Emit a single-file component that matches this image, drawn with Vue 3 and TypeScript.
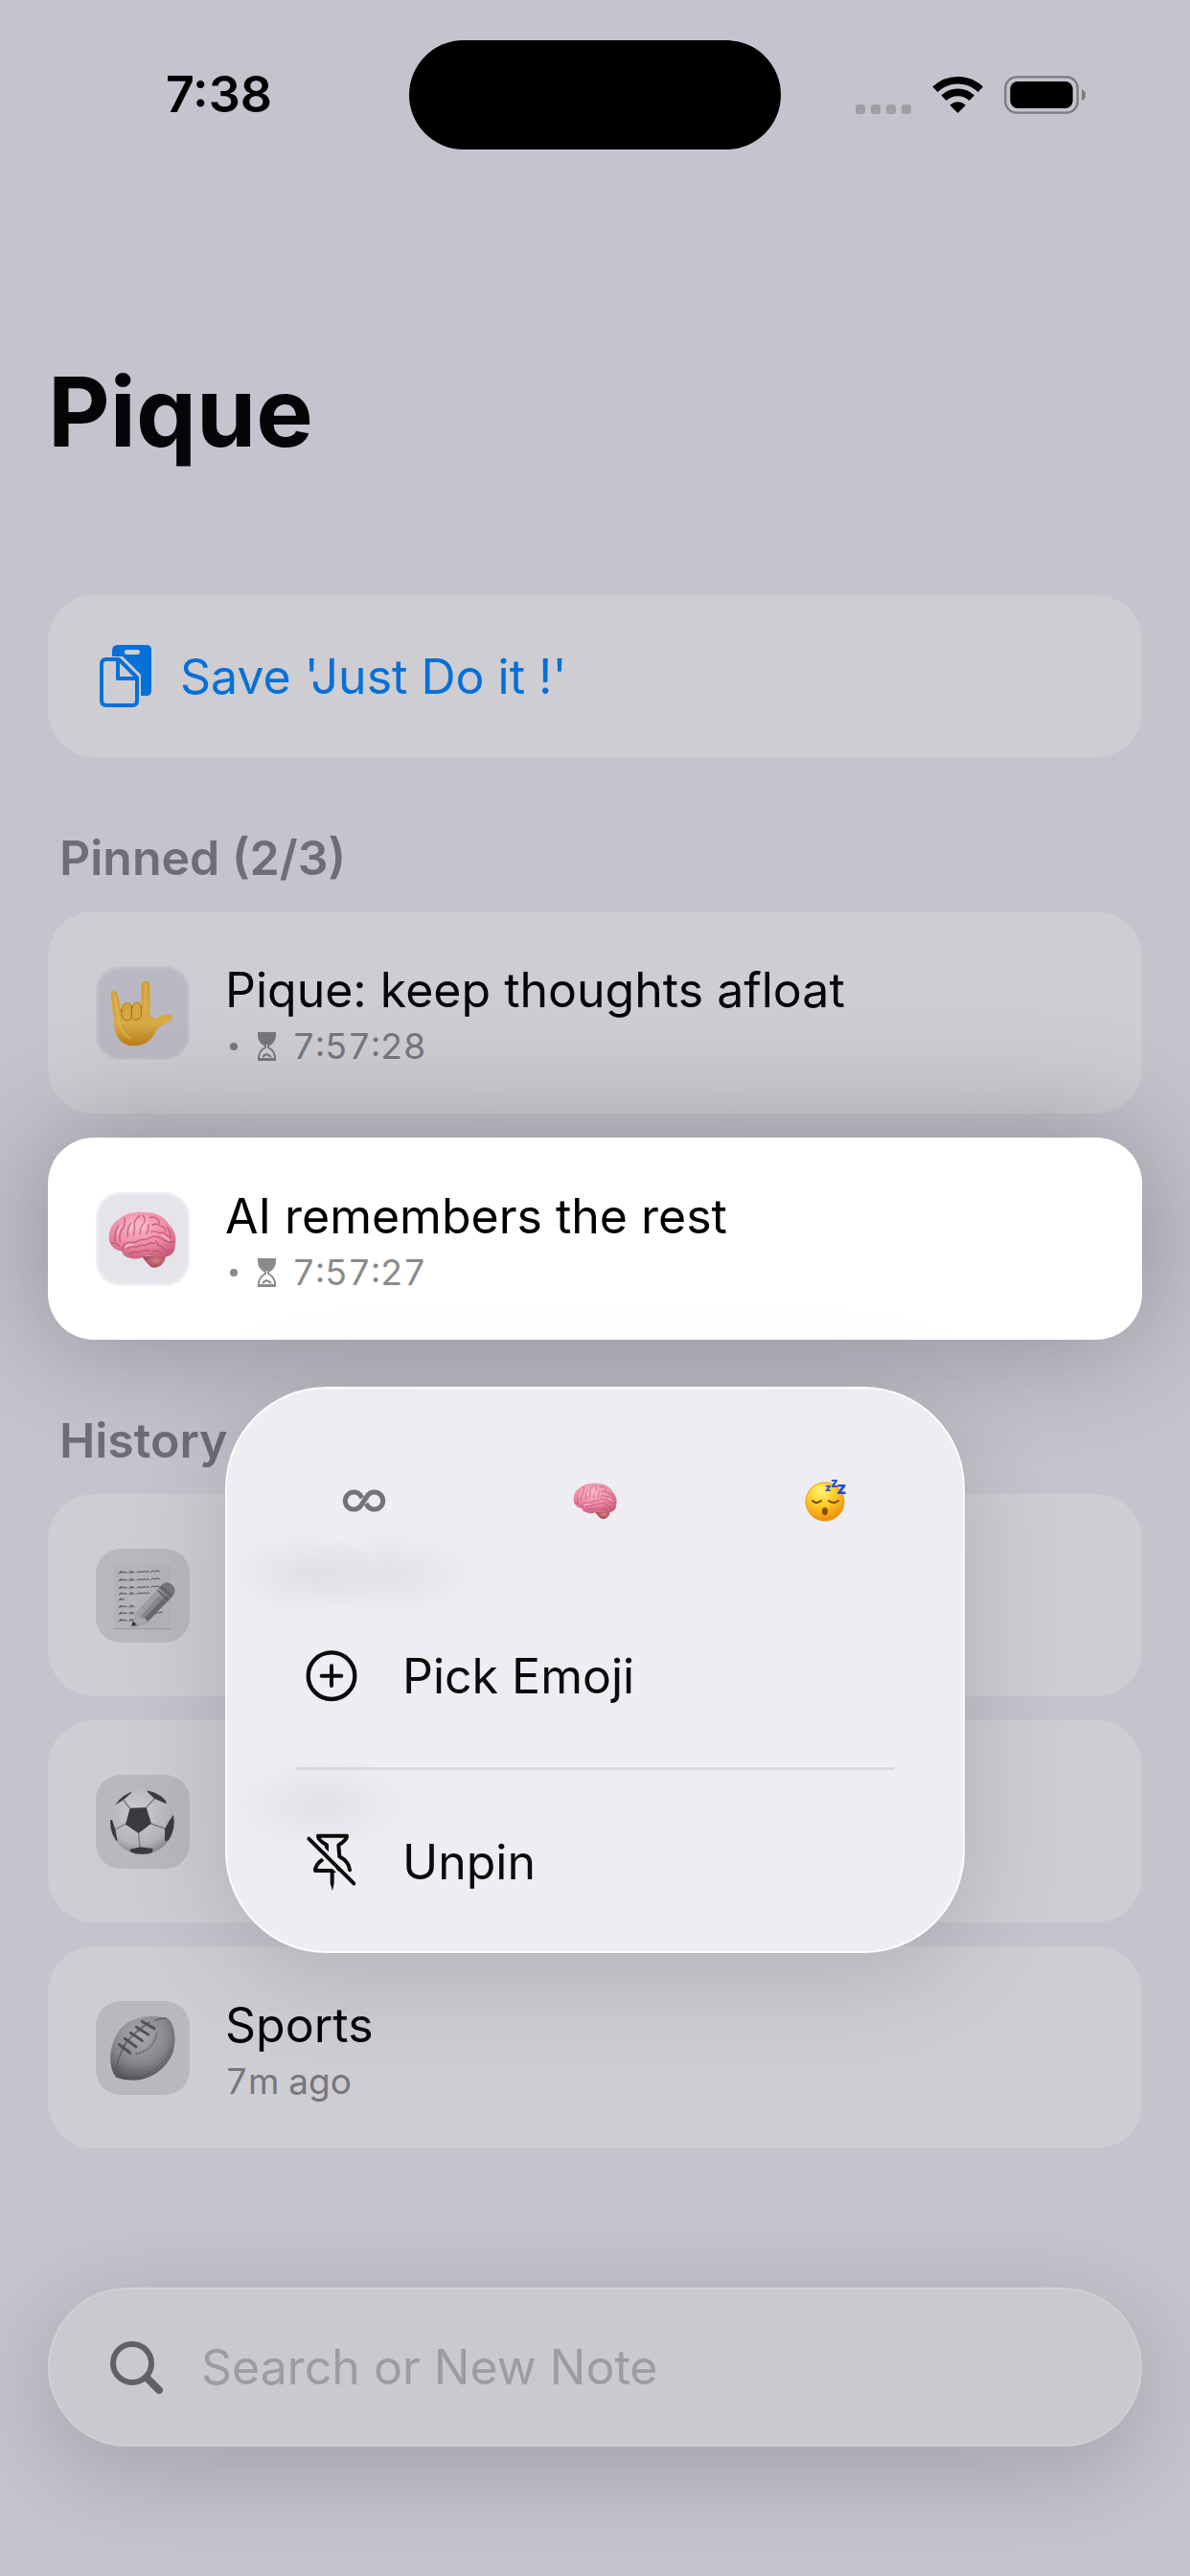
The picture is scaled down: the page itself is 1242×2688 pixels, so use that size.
<script setup lang="ts">
import { ref } from 'vue'

type Glyph = 'hand' | 'brain' | 'memo' | 'soccer' | 'football'

interface Note {
  id: number
  title: string
  glyph: Glyph
  countdown?: string
  age?: string
  selected?: boolean
}

const query = ref('')

const pinned: Note[] = [
  { id: 1, title: 'Pique: keep thoughts afloat', glyph: 'hand', countdown: '7:57:28' },
  { id: 2, title: 'AI remembers the rest', glyph: 'brain', countdown: '7:57:27', selected: true },
]

const history: Note[] = [
  { id: 3, title: '', glyph: 'memo' },
  { id: 4, title: '', glyph: 'soccer' },
  { id: 5, title: 'Sports', glyph: 'football', age: '7m ago' },
]

const memoLines = [300, 324, 348, 367, 385, 407, 428, 450]
const laces = [0, 1, 2, 3, 4]
</script>

<template>
  <svg class="defs" aria-hidden="true">
    <defs>
      <linearGradient id="handFill" x1="0" y1="0" x2="0" y2="1">
        <stop offset="0" stop-color="#cf9c35" />
        <stop offset=".65" stop-color="#d8ac48" />
        <stop offset="1" stop-color="#bd7d18" />
      </linearGradient>
      <radialGradient id="brainFill" cx=".45" cy=".3" r=".75">
        <stop offset="0" stop-color="#fbb9c9" />
        <stop offset=".55" stop-color="#ee8ba6" />
        <stop offset="1" stop-color="#c9587c" />
      </radialGradient>
      <radialGradient id="stemFill" cx=".6" cy=".4" r=".7">
        <stop offset="0" stop-color="#d97f85" />
        <stop offset="1" stop-color="#8f3a48" />
      </radialGradient>
      <radialGradient id="ballFill" cx=".45" cy=".35" r=".7">
        <stop offset="0" stop-color="#d0cfd3" />
        <stop offset=".7" stop-color="#b5b4b8" />
        <stop offset="1" stop-color="#7d7c80" />
      </radialGradient>
      <radialGradient id="rugbyFill" cx=".45" cy=".3" r=".75">
        <stop offset="0" stop-color="#acabaf" />
        <stop offset=".6" stop-color="#858488" />
        <stop offset="1" stop-color="#4c4b4f" />
      </radialGradient>
      <radialGradient id="faceFill" cx=".4" cy=".22" r=".8">
        <stop offset="0" stop-color="#fff56a" />
        <stop offset=".5" stop-color="#fdc928" />
        <stop offset="1" stop-color="#ef8b0c" />
      </radialGradient>
      <clipPath id="ballClip"><circle cx="322" cy="1083" r="100" /></clipPath>
      <symbol id="brain" viewBox="66 105 214 180">
        <path d="M172 246 Q188 268 200 278 Q216 286 232 274 Q246 262 246 244 Z" fill="url(#stemFill)" />
        <path
          d="M70 196 C66 168 78 142 102 128 C122 110 158 104 190 109 C222 110 246 126 258 148 C276 164 282 192 276 212 C276 234 262 246 244 248 C226 250 204 246 188 244 C172 252 150 258 132 250 C118 246 112 240 110 230 C92 228 74 216 70 196 Z"
          fill="url(#brainFill)"
        />
        <g fill="none" stroke="#b84b70" stroke-width="4" stroke-linecap="round" stroke-linejoin="round" opacity=".75">
          <path d="M88 200 Q84 172 100 150 M104 198 Q98 176 114 156 Q122 140 118 126" />
          <path d="M128 184 Q126 156 138 142 M146 180 Q152 158 148 142 Q154 126 166 118" />
          <path d="M166 178 Q166 154 180 142 Q184 128 176 118 M186 176 Q196 160 192 146" />
          <path d="M196 126 Q206 120 216 126 Q228 132 226 142 M204 148 Q218 140 232 152 Q244 152 246 166" />
          <path d="M200 170 Q214 164 224 172 Q240 168 254 184 M252 156 Q262 170 262 188" />
          <path d="M112 228 Q110 206 130 202 Q154 204 168 194 Q190 194 206 184 Q224 182 236 192 Q252 204 270 200" />
          <path d="M128 222 Q142 210 154 218 Q168 208 182 212 Q196 200 212 206 M132 238 Q150 228 164 234 Q180 224 196 228" />
          <path d="M216 196 Q218 212 234 214 Q238 228 254 228 M206 232 Q222 222 232 236 M78 204 Q92 202 102 214" />
        </g>
        <g fill="none" stroke="#ffd0dc" stroke-width="5" stroke-linecap="round" opacity=".7">
          <path d="M96 176 Q98 160 106 150 M136 168 Q136 152 144 144 M174 160 Q178 148 186 140 M120 216 Q130 208 146 210 M238 180 Q250 188 258 196" />
        </g>
      </symbol>
    </defs>
  </svg>

  <main class="screen">
    <header class="status">
      <time class="clock">7:38</time>
      <div class="island"></div>
      <div class="indicators">
        <span class="dots"><i></i><i></i><i></i><i></i></span>
        <svg class="wifi" viewBox="399 91 159 120" aria-label="Wi-Fi">
          <g fill="none" stroke="#000" stroke-width="23">
            <path d="M408 134 A102 102 0 0 1 550 134" />
            <path d="M435 161 A63 63 0 0 1 523 161" />
          </g>
          <path d="M479 205 L457 183 A34 34 0 0 1 501 183 Z" stroke="#000" stroke-width="4" stroke-linejoin="round" />
        </svg>
        <svg class="battery" viewBox="624 90 258 120" aria-label="Battery">
          <rect x="628" y="94" width="226" height="112" rx="35" fill="none" stroke="#7b7b80" stroke-width="7" />
          <rect x="643" y="108" width="196" height="84" rx="24" />
          <path d="M867 132 Q879 138 879 150 Q879 162 867 168 Z" fill="#7b7b80" />
        </svg>
      </div>
    </header>

    <h1 class="title">Pique</h1>

    <button class="card save" type="button">
      <svg class="paste" viewBox="0 0 54 65" aria-hidden="true">
        <path
          d="M19 0 H49 Q54 0 54 5 V48 Q54 53 49 53 H43 V31 L24 12 H13 V6 Q13 0 19 0 Z M28 5 Q26 5 26 7 Q26 10 28 10 H40 Q42 10 42 7 Q42 5 40 5 Z"
          fill="currentColor"
          fill-rule="evenodd"
        />
        <path
          d="M7 15 H20 L39 34 V58 Q39 63 34 63 H7 Q2 63 2 58 V20 Q2 15 7 15 Z M19 16 V35 H38"
          fill="none"
          stroke="currentColor"
          stroke-width="4"
          stroke-linejoin="round"
        />
      </svg>
      <span>Save 'Just Do it !'</span>
    </button>

    <section>
      <h2 class="heading">Pinned (2/3)</h2>
      <ul class="list">
        <li v-for="note in pinned" :key="note.id" class="card row" :class="{ selected: note.selected }">
          <span class="tile pinned-tile">
            <svg v-if="note.glyph === 'hand'" viewBox="30 53 294 294" aria-hidden="true">
              <path
                d="M77 146 C74 128 98 126 99 144 L110 188 Q112 168 127 168 Q140 166 144 178 Q150 162 162 166 Q170 168 172 176 V114 Q173 100 186 100 Q199 100 200 114 V202 Q206 218 218 218 Q236 204 258 204 Q272 206 270 218 Q266 226 252 230 Q234 238 222 252 Q198 302 154 303 H136 Q88 290 87 226 Z"
                fill="url(#handFill)"
              />
              <g fill="none" stroke="#a06c16" stroke-width="3" stroke-linecap="round">
                <path d="M110 188 Q108 214 120 222 Q138 228 142 212 V178 M142 212 Q148 226 162 220 Q174 214 172 196 V176" />
                <path d="M114 196 Q112 170 127 169 Q140 168 142 184 M144 184 Q148 164 162 167 Q171 168 172 182" opacity=".6" />
              </g>
              <path d="M186 110 V196 M88 142 L100 212 Q104 262 138 280" fill="none" stroke="#e3bd58" stroke-width="8" stroke-linecap="round" opacity=".5" />
            </svg>
            <svg v-else viewBox="28 45 294 294" aria-hidden="true">
              <use href="#brain" x="66" y="105" width="214" height="180" />
            </svg>
          </span>
          <div class="text">
            <p class="name">{{ note.title }}</p>
            <p class="meta">
              <i class="bullet"></i>
              <svg class="hourglass" viewBox="0 0 21 30" aria-hidden="true">
                <path d="M1 0 H20 V3 H1 Z M1 27 H20 V30 H1 Z M2 3 H19 Q19 9 12 13 H9 Q2 9 2 3 Z" fill="currentColor" />
                <path d="M2 3 Q2 10 9 14 V16 Q2 20 2 27 M19 3 Q19 10 12 14 V16 Q19 20 19 27 M6 26 Q8 24 10 23 Q13 24 15 26" fill="none" stroke="currentColor" stroke-width="2" />
              </svg>
              <span>{{ note.countdown }}</span>
            </p>
          </div>

          <div v-if="note.selected" class="menu" role="menu">
            <div class="choices">
              <button type="button" aria-label="No emoji">
                <svg class="infinity" viewBox="0 0 46 24" aria-hidden="true">
                  <path d="M21 9 L19 6 A9 9 0 1 0 19 18 L27 6 A9 9 0 1 1 27 18 L25 15" fill="none" stroke="#747477" stroke-width="5" />
                </svg>
              </button>
              <button type="button" aria-label="Brain">
                <svg class="mini-brain" aria-hidden="true"><use href="#brain" /></svg>
              </button>
              <button type="button" aria-label="Sleeping face">
                <svg class="sleepy" viewBox="0 0 44 44" aria-hidden="true">
                  <circle cx="21" cy="23" r="20" fill="url(#faceFill)" stroke="#eb9a15" />
                  <path d="M8 22 Q12 26 17 22 M25 22 Q30 26 35 22" fill="none" stroke="#7b4a0a" stroke-width="2" stroke-linecap="round" />
                  <ellipse cx="21" cy="33" rx="3" ry="4" fill="#8a4a08" />
                  <g fill="#1f4fd0" font-family="Inter, sans-serif" font-weight="800">
                    <text x="21" y="12" font-size="11">z</text>
                    <text x="27" y="8" font-size="13">z</text>
                    <text x="33" y="15" font-size="18">z</text>
                  </g>
                </svg>
              </button>
            </div>
            <button class="item" type="button" role="menuitem">
              <svg viewBox="838 548 162 162" aria-hidden="true">
                <circle cx="919" cy="628" r="73" fill="none" stroke="#0b0b0c" stroke-width="13" />
                <path d="M888 628 H950 M919 597 V659" stroke="#0b0b0c" stroke-width="12" stroke-linecap="round" />
              </svg>
              <span>Pick Emoji</span>
            </button>
            <hr class="rule" />
            <button class="item" type="button" role="menuitem">
              <svg viewBox="834 1120 162 186" aria-hidden="true">
                <g fill="none" stroke="#0b0b0c" stroke-width="12" stroke-linecap="round" stroke-linejoin="round">
                  <path d="M900 1182 V1160 Q873 1144 873 1131 H963 Q963 1144 937 1160 L940 1196 Q970 1212 972 1238" />
                  <path d="M886 1206 Q864 1222 864 1240 H932" />
                </g>
                <path d="M911 1240 H923 V1280 L918 1303 L911 1280 Z" fill="#0b0b0c" />
                <path d="M852 1133 L996 1276" stroke="#eeedf2" stroke-width="8" />
                <path d="M836 1147 L980 1290" stroke="#eeedf2" stroke-width="8" />
                <path d="M844 1140 L985 1280" stroke="#0b0b0c" stroke-width="12" stroke-linecap="round" />
              </svg>
              <span>Unpin</span>
            </button>
          </div>
        </li>
      </ul>
    </section>

    <section>
      <h2 class="heading">History</h2>
      <ul class="list">
        <li v-for="note in history" :key="note.id" class="card row">
          <span class="tile">
            <svg v-if="note.glyph === 'memo'" viewBox="177 228 294 294" aria-hidden="true">
              <rect x="234" y="276" width="178" height="204" fill="#b4b3b8" />
              <path d="M234 479 H412" stroke="#9a999d" stroke-width="3" />
              <g fill="none" stroke="#4c4b4f" stroke-width="3" stroke-linecap="round">
                <path
                  v-for="(y, i) in memoLines"
                  :key="y"
                  :d="`M250 ${y + 5} q8 -14 6 0 q8 -10 10 -1 ${i === 4 ? '' : 'q5 -8 8 0 m8 1 q7 -16 7 -1 q6 -8 9 -1'} ${i < 4 ? 'm8 0 q6 -9 9 0 q7 -8 9 -1 q6 -7 10 0 q6 -8 10 -1' : ''} ${i < 3 ? 'm6 0 q7 -9 12 -1 q6 -7 14 -1' : ''}`"
                />
              </g>
              <path d="M364 432 q8 -10 12 -2 q6 -6 10 -3" fill="none" stroke="#4c4b4f" stroke-width="3" />
              <path d="M290 470 L304 428 L374 352 L410 384 L338 458 L300 474 Z" fill="#89888c" />
              <path d="M304 428 L374 352 L386 362 L316 440 Z" fill="#a09fa4" />
              <path d="M326 448 L398 374 L410 384 L338 458 Z" fill="#6a696d" />
              <path d="M374 352 L386 338 Q398 328 414 340 Q430 354 422 370 L410 385 Z" fill="#757478" />
              <path d="M370 358 L404 390 M380 346 L415 378" stroke="#5c5b5f" stroke-width="4" />
              <path d="M304 428 L290 470 L318 466 L340 456 L328 444 L322 446 Z" fill="#a9a8ad" />
              <path d="M293 455 L288 470 L306 466 Z" fill="#333236" />
            </svg>
            <svg v-else-if="note.glyph === 'soccer'" viewBox="177 935 294 294" aria-hidden="true">
              <circle cx="322" cy="1083" r="101" fill="url(#ballFill)" />
              <g clip-path="url(#ballClip)">
                <g fill="none" stroke="#7a797d" stroke-width="4">
                  <path d="M284 1040 L264 1014 M334 1038 L360 1010 M350 1088 L396 1104 M311 1118 L315 1162 M271 1088 L238 1106" />
                </g>
                <g fill="#3c3b40">
                  <path d="M284 1039 L335 1037 L351 1087 L311 1118 L270 1090 Z" />
                  <path d="M236 1030 L264 1013 L290 990 L260 984 Z" />
                  <path d="M336 986 L360 1009 L398 1026 L394 996 L350 976 Z" />
                  <path d="M420 1060 Q402 1084 393 1104 V1142 L424 1138 L430 1070 Z" />
                  <path d="M220 1076 L228 1076 L238 1106 L245 1142 L222 1130 Z" />
                  <path d="M284 1168 L316 1161 L356 1166 L350 1190 H290 Z" />
                </g>
              </g>
            </svg>
            <svg v-else viewBox="177 202 294 294" aria-hidden="true">
              <path
                d="M232 428 C214 390 222 330 252 292 C284 252 344 242 400 256 C424 270 430 320 420 358 C402 414 350 448 298 450 C262 450 238 444 232 428 Z"
                fill="url(#rugbyFill)"
              />
              <path d="M270 340 Q240 380 240 440 M360 264 Q380 254 398 256" fill="none" stroke="#5f5e62" stroke-width="4" />
              <path d="M240 440 Q330 452 380 400 Q404 376 414 350" fill="none" stroke="#47464a" stroke-width="3" stroke-dasharray="3 5" />
              <path d="M302 368 Q360 356 368 300" fill="none" stroke="#6c6b6f" stroke-width="6" stroke-dasharray="7 3" />
              <path d="M258 352 Q286 306 346 268" fill="none" stroke="#66656a" stroke-width="6" />
              <g stroke="#535256" stroke-width="9" stroke-linecap="round">
                <line
                  v-for="i in laces"
                  :key="i"
                  :x1="250 + i * 18"
                  :y1="338 - i * 18"
                  :x2="284 + i * 19"
                  :y2="364 - i * 19"
                />
              </g>
            </svg>
          </span>
          <div v-if="note.title" class="text">
            <p class="name">{{ note.title }}</p>
            <p class="meta">{{ note.age }}</p>
          </div>
        </li>
      </ul>
    </section>

    <label class="search">
      <svg viewBox="0 0 55 55" aria-hidden="true">
        <circle cx="23" cy="23" r="20" fill="none" stroke="#606065" stroke-width="6" />
        <path d="M38 38 L51 51" stroke="#606065" stroke-width="8" stroke-linecap="round" />
      </svg>
      <input v-model="query" type="text" placeholder="Search or New Note" aria-label="Search or New Note" />
    </label>
  </main>
</template>

<style>
body {
  margin: 0;
  background: #c4c4ce;
}
</style>

<style scoped>
.defs {
  position: absolute;
  width: 0;
  height: 0;
}

.screen {
  display: flex;
  flex-direction: column;
  box-sizing: border-box;
  min-height: 100vh;
  padding: 0 50px 135px;
  overflow: hidden;
  background: #c4c4ce;
  color: #050508;
  font-family: Inter, "Liberation Sans", sans-serif;
  font-size: 50px;
  line-height: 66px;
}

button {
  padding: 0;
  border: 0;
  background: none;
  color: inherit;
  font: inherit;
  text-align: left;
}

h1,
h2,
p,
ul {
  margin: 0;
  padding: 0;
}

.status {
  display: grid;
  grid-template-columns: 1fr 388px 1fr;
  align-items: center;
  margin: 0 -20px;
  padding-top: 42px;
  color: #000;
}

.clock {
  font-size: 52px;
  font-weight: 600;
  text-align: center;
}

.island {
  height: 114px;
  border-radius: 57px;
  background: #000;
}

.indicators {
  display: flex;
  align-items: center;
  justify-content: center;
  gap: 22px;
}

.dots {
  display: flex;
  align-self: flex-end;
  gap: 6px;
}

.dots i {
  width: 10px;
  height: 10px;
  border-radius: 3px;
  background: #9f9ea4;
}

.wifi {
  width: 53px;
  height: 40px;
}

.battery {
  width: 86px;
  height: 40px;
}

.title {
  margin: 212px 0 129px;
  font-size: 100px;
  font-weight: 700;
  line-height: 124px;
}

.card {
  border-radius: 48px;
  background: #cecdd2;
}

.save {
  display: flex;
  align-items: center;
  gap: 30px;
  height: 169px;
  padding: 0 54px;
  color: #0670d8;
}

.paste {
  width: 54px;
  height: 65px;
}

.heading {
  padding: 74px 12px 25px;
  color: #6e6d78;
  font-size: 50px;
  font-weight: 600;
  line-height: 62px;
}

.list {
  display: flex;
  flex-direction: column;
  gap: 25px;
  list-style: none;
}

.row {
  position: relative;
  display: flex;
  align-items: center;
  gap: 37px;
  box-sizing: border-box;
  height: 211px;
  padding: 0 50px;
}

.selected {
  z-index: 2;
  background: #fff;
  box-shadow: 0 0 130px rgba(0, 0, 0, 0.3);
  color: #000;
}

.tile {
  flex: none;
  width: 98px;
  height: 98px;
  border-radius: 26px;
  background: #b9b8bd;
}

.tile svg {
  display: block;
  width: 98px;
  height: 98px;
}

.pinned-tile {
  background: #bab9c3;
  box-shadow: inset 0 0 4px 1px rgba(255, 255, 255, 0.25);
}

.selected .tile {
  background: #e5e4e9;
  box-shadow: inset 0 0 4px 1px rgba(255, 255, 255, 0.8);
}

.text {
  display: flex;
  flex-direction: column;
  gap: 4px;
}

.meta {
  display: flex;
  align-items: center;
  color: #77767d;
  font-size: 37px;
  font-variant-numeric: tabular-nums;
  line-height: 43px;
}

.selected .meta {
  color: #8a8a8e;
}

.bullet {
  width: 8px;
  height: 8px;
  margin: 0 20px 0 5px;
  border-radius: 50%;
  background: currentColor;
}

.hourglass {
  width: 21px;
  height: 30px;
  margin-right: 16px;
}

.menu {
  position: absolute;
  top: calc(100% + 49px);
  left: 50%;
  box-sizing: border-box;
  width: 772px;
  padding: 29px 24px;
  border-radius: 106px;
  background:
    radial-gradient(closest-side, rgba(0, 0, 0, 0.05), transparent) 0 150px / 160px 90px no-repeat,
    radial-gradient(closest-side, rgba(0, 0, 0, 0.05), transparent) 70px 150px / 200px 90px no-repeat,
    radial-gradient(closest-side, rgba(0, 0, 0, 0.05), transparent) 0 386px / 200px 100px no-repeat,
    #eeedf2;
  box-shadow:
    inset 0 0 0 2px rgba(255, 255, 255, 0.8),
    0 20px 110px rgba(0, 0, 0, 0.15);
  color: #0b0b0c;
  transform: translateX(-50%);
}

.choices {
  display: grid;
  grid-template-columns: repeat(3, 1fr);
  height: 180px;
  margin-bottom: 27px;
}

.choices button {
  display: flex;
  align-items: center;
  justify-content: center;
}

.infinity {
  width: 46px;
  height: 24px;
}

.mini-brain {
  width: 46px;
  height: 39px;
}

.sleepy {
  width: 44px;
  height: 44px;
  overflow: visible;
}

.item {
  display: flex;
  align-items: center;
  gap: 47px;
  width: 100%;
  height: 132px;
  padding: 0 60px;
}

.item svg {
  width: 54px;
  height: 62px;
}

.rule {
  height: 3px;
  margin: 29px 50px 30px;
  border: 0;
  background: #dad9de;
}

.search {
  display: flex;
  align-items: center;
  gap: 40px;
  box-sizing: border-box;
  height: 166px;
  margin-top: auto;
  padding: 0 65px;
  border-radius: 83px;
  background: #cacace;
  box-shadow:
    inset 0 0 0 2px rgba(255, 255, 255, 0.12),
    0 24px 100px rgba(0, 0, 0, 0.18);
}

.search svg {
  flex: none;
  width: 55px;
  height: 55px;
}

.search input {
  flex: 1;
  min-width: 0;
  padding: 0;
  border: 0;
  outline: 0;
  background: none;
  color: #050508;
  font: inherit;
}

.search input::placeholder {
  color: #9c9ca1;
  opacity: 1;
}
</style>
